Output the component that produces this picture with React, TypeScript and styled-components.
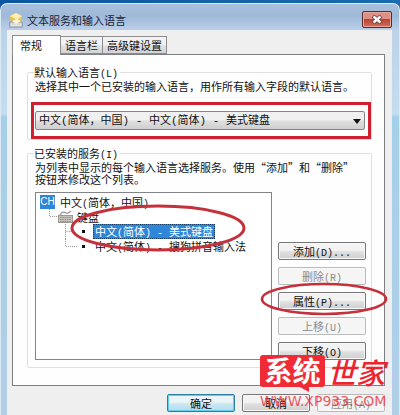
import React from "react";
import styled, { createGlobalStyle } from "styled-components";

const GlobalStyle = createGlobalStyle`
  *, *::before, *::after { box-sizing: border-box; }
  body {
    margin: 0;
    background: #1b65a5;
    color: #111;
    font: 11px/14px "Noto Sans CJK SC", "Liberation Sans", sans-serif;
  }
  button, select { font: inherit; color: inherit; }
`;

const Desktop = styled.div`
  min-height: 100vh;
  padding-top: 3px;
  display: flex;
  overflow: hidden;
  background: linear-gradient(90deg, #0c55a0, #1a6cae);
`;

const Window = styled.main`
  position: relative;
  flex: 1;
  min-width: 0;
  display: flex;
  flex-direction: column;
  padding: 0 7px 0 6px;
  border: solid #dceaf5;
  border-width: 1px 1px 0;
  border-radius: 7px 7px 0 0;
  background:
    linear-gradient(180deg, #a9c0dc 0, #9fb9d9 12px, #bcd1ea 27px, transparent 27px),
    linear-gradient(180deg, #b9cfe8 0, #c6dcef 110px, #a5cfe9 113px, #b3cfe8 100%);
`;

const TitleBar = styled.header`
  height: 26px;
  display: flex;
  align-items: center;
  gap: 4px;
  padding: 5px 0 0 2px;
`;

const Title = styled.h1`
  flex: 1;
  margin: 0;
  font-size: 11px;
  line-height: 16px;
  font-weight: 400;
  color: #16243a;
`;

const CloseButton = styled.button`
  width: 30px;
  height: 17px;
  padding: 0;
  display: grid;
  place-items: center;
  border: 1px solid #5b2a2c;
  border-radius: 2px;
  box-shadow: inset 0 0 0 1px #e9a79c;
  background: linear-gradient(#dd8f83 0 45%, #bb4334 50%, #d1705a);
`;

const Client = styled.div`
  flex: 1;
  display: flex;
  flex-direction: column;
  padding: 5px 7px 2px 5px;
  background: #efeff0;
`;

const TabList = styled.div`
  display: flex;
  align-items: flex-end;
  height: 20px;
  margin-bottom: -1px;
  z-index: 1;
`;

const Tab = styled.button<{ $active?: boolean }>`
  height: ${(p) => (p.$active ? 20 : 18)}px;
  padding: ${(p) => (p.$active ? "0 18px 2px 7px" : "0 4px")};
  margin-bottom: ${(p) => (p.$active ? 0 : 1)}px;
  border: 1px solid #8b8d90;
  border-bottom-width: ${(p) => (p.$active ? 0 : 1)}px;
  border-left-width: ${(p) => (p.$active ? 1 : 0)}px;
  background: ${(p) => (p.$active ? "#fff" : "linear-gradient(#f2f2f2 0 45%, #e2e2e2 55%, #d3d3d3)")};
`;

const Panel = styled.section`
  display: flex;
  flex-direction: column;
  gap: 6px;
  padding: 10px 12px 17px 14px;
  border: 1px solid #7d7f82;
  background: #fefefe;
`;

const Group = styled.fieldset`
  min-width: 0;
  margin: 0;
  padding: 0 0 7px;
  border: 1px solid #dedfe1;
  border-radius: 2px;
`;

const PlainGroup = styled(Group)`
  padding-bottom: 0;
`;

const Legend = styled.legend`
  height: 14px;
  margin-left: 6px;
  padding: 0 2px 0 0;
`;

const Description = styled.p`
  margin: 0;
  padding: 0 4px 0 7px;
  line-height: 14px;
`;

const DenseDescription = styled(Description)`
  padding-top: 1px;
  line-height: 12px;
`;

const Latin = styled.span`
  font-family: "Liberation Mono", monospace;
  font-size: 10px;
  line-height: 0;
  white-space: pre;
`;

const Highlight = styled.div`
  margin: 9px 0 0 3px;
  padding: 6px 3px 6px 1px;
  border: 3px solid #d0202f;
`;

const SelectBox = styled.div`
  position: relative;
`;

const LanguageSelect = styled.select`
  display: block;
  width: 100%;
  height: 19px;
  padding: 0 18px 0 3px;
  appearance: none;
  border: 1px solid #858585;
  border-radius: 2px;
  background: linear-gradient(#f0f0f0 0 45%, #dedede 55%, #cfcfcf);
  font-family: "Liberation Mono", "Noto Sans CJK SC", monospace;
`;

const Arrow = styled.svg`
  position: absolute;
  right: 4px;
  top: 8px;
  pointer-events: none;
`;

const Services = styled.div`
  display: flex;
  align-items: flex-end;
  gap: 6px;
  padding: 7px 5px 0 7px;
`;

const Tree = styled.div`
  position: relative;
  flex: 1;
  align-self: stretch;
  padding: 1px 0 0 4px;
  border: 1px solid #828488;
  background: #fff;
`;

const TreeRow = styled.div<{ $level: number }>`
  height: 15px;
  display: flex;
  align-items: center;
  padding-left: ${(p) => [0, 9, 25][p.$level]}px;
  white-space: nowrap;
`;

const Language = styled.span`
  width: 15px;
  height: 14px;
  margin-right: 5px;
  background: #2f86d8;
  color: #fff;
  font: 10px/14px "Liberation Sans", sans-serif;
  text-align: center;
`;

const ItemLabel = styled.span<{ $selected?: boolean }>`
  height: 15px;
  padding: 0 1px;
  margin-left: 4px;
  line-height: 13px;
  border: 1px ${(p) => (p.$selected ? "dotted #163f6a" : "solid transparent")};
  background: ${(p) => (p.$selected ? "#2f86d8" : "transparent")};
  color: ${(p) => (p.$selected ? "#fff" : "inherit")};
`;

const FolderLabel = styled.span`
  margin-left: 4px;
`;

const TreeRing = styled.svg`
  position: absolute;
  left: 33px;
  top: 10px;
  pointer-events: none;
`;

const Actions = styled.div`
  width: 88px;
  padding-top: 50px;
  display: flex;
  flex-direction: column;
  gap: 7px;
`;

const RingHost = styled.div`
  position: relative;
  display: flex;
`;

const ButtonRing = styled.svg`
  position: absolute;
  left: -18px;
  top: -10px;
  z-index: 1;
  pointer-events: none;
`;

const Button = styled.button<{ $primary?: boolean }>`
  flex: 1 0 auto;
  height: 18px;
  padding: 0;
  border: 1px solid ${(p) => (p.$primary ? "#2d7f9f" : "#777")};
  border-radius: 2px;
  box-shadow: inset 0 0 0 1px ${(p) => (p.$primary ? "#62cdec" : "#f8f8f8")};
  background: ${(p) =>
    p.$primary
      ? "linear-gradient(#eaf5fa 0 45%, #cbe7f3 55%, #b5dced)"
      : "linear-gradient(#f3f3f3 0 45%, #e0e0e0 55%, #cfcfcf)"};
  line-height: 14px;
  &:disabled {
    border-color: #b9babc;
    background: #f5f5f5;
    color: #8b8b8b;
  }
`;

const Footer = styled.footer`
  display: flex;
  justify-content: flex-end;
  gap: 7px;
  padding-top: 8px;
`;

const FooterButton = styled(Button)`
  flex: 0 0 68px;
`;

const Watermark = styled.div`
  position: absolute;
  right: 10px;
  bottom: 5px;
  width: 129px;
  z-index: 2;
  color: #ed2430;
  pointer-events: none;
`;

const Brand = styled.div`
  display: flex;
  align-items: center;
  gap: 2px;
`;

const Badge = styled.span`
  position: relative;
  width: 65px;
  height: 32px;
  border-radius: 3px;
  background: #f02b35;
  color: #fff;
  font-size: 28px;
  font-weight: 700;
  line-height: 30px;
  text-align: center;
  white-space: nowrap;
`;

const BadgeTail = styled.svg`
  position: absolute;
  left: 38px;
  top: 31px;
`;

const Brush = styled.span`
  font-size: 29px;
  font-weight: 500;
  font-style: italic;
  line-height: 32px;
  white-space: nowrap;
`;

const Site = styled.div`
  margin-top: 5px;
  font: 14px/18px "DejaVu Sans", sans-serif;
  opacity: 0.75;
  white-space: nowrap;
`;

const services = [
  { name: "美式键盘", selected: true },
  { name: "搜狗拼音输入法", selected: false },
];

const TitleIcon = () => (
  <svg width="14" height="16" viewBox="0 0 14 16" aria-hidden="true">
    <path d="M1 10h12l1 5H0z" fill="#c9ced2" stroke="#7e8a98" strokeWidth=".7" />
    <path d="M2 12h10M2 13.5h10" stroke="#f5f5f5" strokeDasharray="1.5 .7" />
    <path d="M1 4l6-3 6 3v4l-5 3-7-3z" fill="#e8bd55" />
    <path d="M1 4l6-3 6 3-5 4z" fill="#ffefab" />
    <path d="M3 9l4 3 5-3-4-2z" fill="#fff4cb" />
  </svg>
);

const KeyboardIcon = () => (
  <svg width="15" height="14" viewBox="0 0 15 14" aria-hidden="true">
    <path d="M2 5c2-4 4-3 6-2s3-1 5-2" fill="none" stroke="#96958f" strokeWidth="1.3" />
    <rect x=".5" y="5.5" width="14" height="7" fill="#c5c2bb" stroke="#9c9993" />
    <path d="M2 7.5h11M2 9.5h11M2 11.5h11" stroke="#85827c" strokeDasharray="1.5 .8" strokeWidth=".8" />
  </svg>
);

const Branch = ({ last }: { last?: boolean }) => (
  <svg width="24" height="15" viewBox="0 0 24 15" aria-hidden="true">
    <path d={last ? "M.5 0v7.5H12" : "M.5 0v15M.5 7.5H7"} fill="none" stroke="#999" strokeDasharray="1 1" />
    <rect x="17" y="6" width="3" height="3" fill="#111" />
  </svg>
);

export default function App() {
  return (
    <>
      <GlobalStyle />
      <Desktop>
        <Window>
          <TitleBar>
            <TitleIcon />
            <Title>文本服务和输入语言</Title>
            <CloseButton aria-label="关闭">
              <svg width="12" height="9" viewBox="0 0 12 9">
                <path d="M2 1l8 7M10 1L2 8" stroke="#6b393b" strokeWidth="4" />
                <path d="M2.5 1.5l7 6M9.5 1.5l-7 6" stroke="#fff" strokeWidth="2.4" />
              </svg>
            </CloseButton>
          </TitleBar>
          <Client>
            <TabList role="tablist">
              <Tab role="tab" aria-selected="true" $active>常规</Tab>
              <Tab role="tab" aria-selected="false">语言栏</Tab>
              <Tab role="tab" aria-selected="false">高级键设置</Tab>
            </TabList>
            <Panel role="tabpanel">
              <PlainGroup>
                <Legend>
                  <label htmlFor="language">默认输入语言<Latin>(L)</Latin></label>
                </Legend>
                <Description>选择其中一个已安装的输入语言，用作所有输入字段的默认语言。</Description>
                <Highlight>
                  <SelectBox>
                    <LanguageSelect id="language">
                      <option>中文(简体，中国) - 中文(简体) - 美式键盘</option>
                    </LanguageSelect>
                    <Arrow width="8" height="5" viewBox="0 0 8 5" aria-hidden="true">
                      <path d="M0 0h8L4 5z" fill="#111" />
                    </Arrow>
                  </SelectBox>
                </Highlight>
              </PlainGroup>
              <Group>
                <Legend>已安装的服务<Latin>(I)</Latin></Legend>
                <DenseDescription>
                  为列表中显示的每个输入语言选择服务。使用“添加”和“删除”
                  <br />
                  按钮来修改这个列表。
                </DenseDescription>
                <Services>
                  <Tree role="tree" aria-label="已安装的服务">
                    <TreeRow $level={0} role="treeitem">
                      <Language>CH</Language>
                      <span>中文<Latin>(</Latin>简体，中国<Latin>)</Latin></span>
                    </TreeRow>
                    <TreeRow $level={1} role="treeitem">
                      <svg width="9" height="15" viewBox="0 0 9 15" aria-hidden="true">
                        <path d="M.5 0v7.5H9" fill="none" stroke="#999" strokeDasharray="1 1" />
                      </svg>
                      <KeyboardIcon />
                      <FolderLabel>键盘</FolderLabel>
                    </TreeRow>
                    {services.map((s, i) => (
                      <TreeRow key={s.name} $level={2} role="treeitem" aria-selected={s.selected}>
                        <Branch last={i === services.length - 1} />
                        <ItemLabel $selected={s.selected}>
                          中文<Latin>(</Latin>简体<Latin>) - </Latin>{s.name}
                        </ItemLabel>
                      </TreeRow>
                    ))}
                    <TreeRing width="178" height="50" viewBox="0 0 178 50" aria-hidden="true">
                      <ellipse cx="89" cy="25" rx="86" ry="22" fill="none" stroke="#c5303a" strokeWidth="3" />
                    </TreeRing>
                  </Tree>
                  <Actions>
                    <Button>添加<Latin>(D)...</Latin></Button>
                    <Button disabled>删除<Latin>(R)</Latin></Button>
                    <RingHost>
                      <Button>属性<Latin>(P)...</Latin></Button>
                      <ButtonRing width="128" height="34" viewBox="0 0 128 34" aria-hidden="true">
                        <ellipse cx="64" cy="17" rx="62" ry="15" fill="none" stroke="#c5303a" strokeWidth="2.6" />
                      </ButtonRing>
                    </RingHost>
                    <Button disabled>上移<Latin>(U)</Latin></Button>
                    <Button>下移<Latin>(O)</Latin></Button>
                  </Actions>
                </Services>
              </Group>
            </Panel>
            <Footer>
              <FooterButton $primary>确定</FooterButton>
              <FooterButton>取消</FooterButton>
              <FooterButton disabled>应用<Latin>(A)</Latin></FooterButton>
            </Footer>
          </Client>
          <Watermark>
            <Brand>
              <Badge>
                系统
                <BadgeTail width="12" height="6" viewBox="0 0 12 6" aria-hidden="true">
                  <path d="M0 0h11v6z" fill="#f02b35" />
                </BadgeTail>
              </Badge>
              <Brush>世家</Brush>
            </Brand>
            <Site>WWW.XP933.COM</Site>
          </Watermark>
        </Window>
      </Desktop>
    </>
  );
}
